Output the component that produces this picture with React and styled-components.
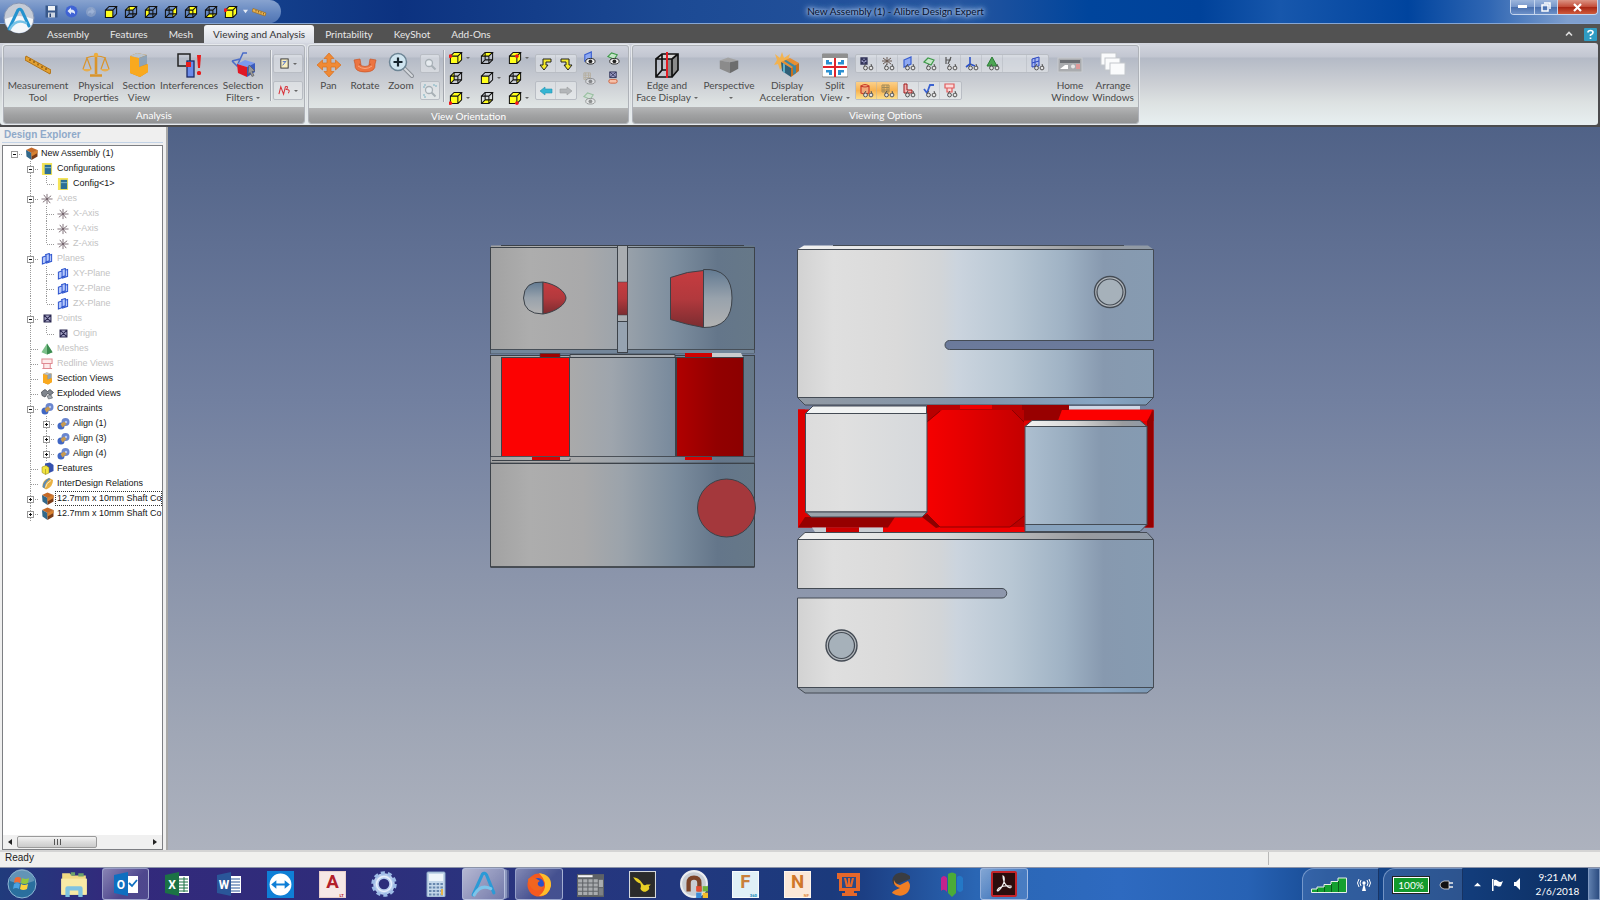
import React from "react";
import styled, { createGlobalStyle, css } from "styled-components";

const UI = `Lato, "Open Sans", "Noto Sans", sans-serif`;
const TREE = `"Liberation Sans", Arial, sans-serif`;

const Global = createGlobalStyle`
  *, *::before, *::after { box-sizing: border-box; }
  body { margin: 0; background: #efefef; }
  button { font: inherit; color: inherit; background: none; border: 0; padding: 0; margin: 0; }
  svg { display: block; flex: none; }
`;

const Shell = styled.div`
  position: relative;
  min-height: 100vh;
  display: flex;
  flex-direction: column;
  font-family: ${UI};
  font-size: 10px;
  line-height: 12px;
  color: #4a4a4a;
`;

/* ---------- title bar ---------- */
const TitleBar = styled.header`
  height: 24px;
  display: flex;
  align-items: flex-start;
  border-bottom: 1px solid #86a6d4;
  background: linear-gradient(90deg, #6f92c8 0, #14408c 260px, #0c3280 25%, #1c4a94 42%, #26559f 60%, #00459c 68%, #00429a 75%, #1757ac 80%, #00449e 88%, #2f66b3 93%, #7f9fce 98%);
`;
const QuickAccess = styled.div`
  display: flex;
  align-items: center;
  height: 23px;
  padding: 0 12px 0 41px;
  border-radius: 0 12px 12px 0;
  background: linear-gradient(180deg, #88a3cf, #6285bf 60%, #5074b2);
`;
const QuickButton = styled.button`
  width: ${(p) => (p.$narrow ? 8 : 20)}px;
  height: 20px;
  display: grid;
  place-items: center;
  opacity: ${(p) => (p.$faded ? 0.45 : 1)};
`;
const WindowTitle = styled.h1`
  flex: 1;
  margin: 0;
  text-align: center;
  font-size: 10px;
  font-weight: 400;
  line-height: 23px;
  color: #05102c;
  text-shadow: 0 0 3px #a9c2e8, 0 0 5px #a9c2e8, 0 0 6px #a9c2e8, 0 0 8px #a9c2e8;
`;
const WindowButtons = styled.div`
  display: flex;
  height: 15px;
  margin-right: 2px;
  border: 1px solid #c6d6ee;
  border-top: 0;
  border-radius: 0 0 4px 4px;
  overflow: hidden;
`;
const WindowButton = styled.button`
  width: ${(p) => (p.$close ? 40 : 23)}px;
  display: grid;
  place-items: center;
  border-left: ${(p) => (p.$first ? 0 : 1)}px solid #c6d6ee;
  background: ${(p) =>
    p.$close
      ? "linear-gradient(180deg, #dc9484, #c24a36 50%, #a82614 52%, #cf5b3c)"
      : "linear-gradient(180deg, #9db6dc, #7595c9 50%, #4a70ae 52%, #6c90c8)"};
`;
const Orb = styled.button`
  position: absolute;
  z-index: 2;
  left: 3px;
  top: 2px;
  width: 32px;
  height: 32px;
`;

/* ---------- tabs ---------- */
const TabBar = styled.nav`
  height: 19px;
  display: flex;
  gap: 1px;
  align-items: flex-end;
  padding: 0 3px 0 37px;
  background: #525252;
`;
const Tab = styled.button`
  height: 18px;
  padding: 0 10px;
  line-height: 18px;
  color: #e8e8e8;
  border-radius: 3px 3px 0 0;
  ${(p) =>
    p.$active &&
    css`
      padding: 0 9px;
      color: #333;
      background: linear-gradient(180deg, #f6f7f9, #d8dce4);
    `}
`;
const Spacer = styled.span`
  flex: 1;
`;
const BarButton = styled.button`
  height: 18px;
  width: ${(p) => p.$w}px;
  display: grid;
  place-items: center;
`;

/* ---------- ribbon ---------- */
const RibbonFrame = styled.div`
  background: #4c4c4e;
  padding: 0 2px 2px 0;
`;
const Ribbon = styled.div`
  display: flex;
  gap: 3px;
  height: 82px;
  padding: 2px 2px 1px 3px;
  border-radius: 0 3px 3px 3px;
  background: linear-gradient(180deg, #d3d6df 0, #c2c6d1 14px, #b4bac6 15px, #cdd0d5 42px, #dde2e2 60px, #e8eff1 82px);
`;
const Group = styled.section`
  width: ${(p) => p.$w}px;
  display: flex;
  flex-direction: column;
  border: 1px solid #aeb2b8;
  border-radius: 3px;
  box-shadow: 0 0 0 1px #e6e9ec;
  overflow: hidden;
`;
const GroupBody = styled.div`
  flex: 1;
  display: flex;
  padding-left: 2px;
`;
const GroupLabel = styled.h2`
  margin: 0;
  height: 16px;
  font-size: 10px;
  font-weight: 400;
  line-height: 16px;
  text-align: center;
  color: #fff;
  background: linear-gradient(180deg, #b4b5b6, #a0a1a2 50%, #929394);
`;
const BigButtonBox = styled.button`
  width: ${(p) => p.$w}px;
  flex: none;
  display: flex;
  flex-direction: column;
  align-items: center;
  padding-top: 4px;
  white-space: nowrap;
`;
const BigIcon = styled.span`
  height: 29px;
  display: grid;
  place-items: center;
`;
const Caption = styled.span`
  display: block;
  height: 12px;
`;
const Arrow = styled.span`
  display: inline-block;
  margin-left: 3px;
  vertical-align: 2px;
  border: 2px solid transparent;
  border-top-color: #666;
  border-bottom: 0;
`;
const Separator = styled.span`
  width: 1px;
  margin: 4px 2px 6px ${(p) => p.$left || 2}px;
  background: #a3a7ae;
  box-shadow: 1px 0 #eceef0;
`;
const Stack = styled.div`
  display: flex;
  flex-direction: column;
  align-items: flex-start;
  gap: 8px;
  padding-top: 8px;
  margin-left: ${(p) => p.$left || 0}px;
`;
const Strip = styled.div`
  display: flex;
  height: 19px;
  border: 1px solid #b9bdc4;
  border-radius: 2px;
  background: rgba(240, 242, 245, 0.45);
`;
const StripButton = styled.button`
  width: ${(p) => p.$w || 21}px;
  display: flex;
  align-items: center;
  justify-content: center;
  border-right: 1px solid rgba(170, 174, 182, 0.4);
  &:last-child { border-right: 0; }
  background: ${(p) => (p.$on ? "linear-gradient(180deg, #fbd08a, #f8b350 50%, #fde08c)" : "none")};
`;
const IconGrid = styled.div`
  display: grid;
  grid-template-columns: ${(p) => p.$cols};
  grid-auto-rows: 20px;
  margin-left: ${(p) => p.$left || 0}px;
  align-content: start;
  padding-top: 2px;
`;
const GridButton = styled.button`
  display: flex;
  align-items: center;
`;

/* ---------- work area ---------- */
const Work = styled.main`
  flex: 1;
  display: flex;
  min-height: 0;
`;
const Explorer = styled.aside`
  width: 168px;
  flex: none;
  display: flex;
  flex-direction: column;
  padding: 0 3px 0 2px;
  background: #efefef;
  border-right: 2px solid #a8a8a8;
  font-family: ${TREE};
  color: #111;
`;
const ExplorerTitle = styled.h2`
  margin: 0 0 2px;
  padding-left: 2px;
  height: 16px;
  font-size: 10px;
  font-weight: 700;
  line-height: 16px;
  color: #8fa9c9;
  border-bottom: 1px solid #c3d3e6;
`;
const TreeBox = styled.div`
  flex: 1;
  display: flex;
  flex-direction: column;
  border: 1px solid #7d7f83;
  background: #fff;
  overflow: hidden;
`;
const TreeList = styled.ul`
  flex: 1;
  list-style: none;
  margin: 0;
  padding: 0 0 0 4px;
`;
const TreeRow = styled.li`
  display: flex;
  height: 15px;
  align-items: center;
  white-space: nowrap;
  color: ${(p) => (p.$dim ? "#c3c3c3" : "#151515")};
`;
const Node = styled.button`
  flex: none;
  width: 16px;
  height: 15px;
`;
const NodeIcon = styled.span`
  width: 16px;
  flex: none;
  display: grid;
  place-items: center;
`;
const NodeLabel = styled.span`
  flex: 1;
  height: 15px;
  padding-left: 2px;
  font-size: 9px;
  line-height: 14px;
  overflow: hidden;
  ${(p) => p.$focus && css`outline: 1px dotted #333; outline-offset: -1px;`}
`;
const ScrollBar = styled.div`
  height: 14px;
  display: flex;
  align-items: center;
  background: #f0f0f0;
`;
const ScrollArrow = styled.button`
  width: 14px;
  height: 14px;
  display: grid;
  place-items: center;
`;
const ScrollThumb = styled.span`
  width: 80px;
  height: 12px;
  display: grid;
  place-items: center;
  border: 1px solid #9a9a9a;
  border-radius: 2px;
  background: linear-gradient(180deg, #f4f4f4, #dcdcdc 50%, #cbcbcb);
`;
const Canvas = styled.div`
  flex: 1;
  min-width: 0;
  background: linear-gradient(180deg, #506287 0, #5f6f92 16%, #7280a0 38%, #8b95ab 62%, #a0a7b6 84%, #adb2be 100%);
  display: flex;
`;
const Scene = styled.svg`
  flex: 1 1 0;
  min-width: 0;
  width: 100%;
`;
const StatusBar = styled.footer`
  height: 17px;
  display: flex;
  align-items: flex-start;
  padding-left: 5px;
  font-family: ${TREE};
  font-size: 10px;
  color: #222;
  background: #f0f0ee;
  border-top: 2px solid #d4d4d4;
`;
const StatusCell = styled.span`
  flex: ${(p) => p.$grow};
  height: 13px;
  line-height: 12px;
  ${(p) => p.$line && css`border-left: 1px solid #b8b8b8;`}
`;

/* ---------- taskbar ---------- */
const TaskBar = styled.div`
  height: 33px;
  display: flex;
  border-top: 1px solid #8b93a8;
  background: linear-gradient(90deg, #203b7c 0, #33297c 7%, #2f2c7a 20%, #2a337e 30%, #22387f 42%, #1b3a7c 52%, #1c3f84 54%, #2a66b4 61%, #2e6ac0 70%, #2762b4 78%, #174a92 83%, #123c7a 92%, #0b2b5c 100%);
`;
const StartButton = styled.button`
  width: 48px;
  display: grid;
  place-items: center;
  padding-right: 4px;
`;
const Tasks = styled.div`
  flex: 0 1 982px;
  display: grid;
  grid-template-columns: repeat(19, 1fr);
`;
const Task = styled.button`
  display: grid;
  place-items: center;
  margin: 0 2px;
  border-radius: 3px;
  ${(p) =>
    p.$open &&
    css`
      border: 1px solid rgba(200, 212, 238, 0.6);
      background: linear-gradient(135deg, rgba(255, 255, 255, 0.42), rgba(255, 255, 255, 0.14) 60%);
    `}
  ${(p) =>
    p.$bright &&
    css`
      margin: 0 8px 0 1px;
      background: linear-gradient(135deg, rgba(255, 255, 255, 0.65), rgba(255, 255, 255, 0.35));
      box-shadow: 3px 0 0 -1px rgba(160, 172, 205, 0.7), 6px 0 0 -2px rgba(120, 132, 170, 0.6);
    `}
`;
const Tray = styled.div`
  display: flex;
  color: #fff;
`;
const TrayPanel = styled.div`
  width: ${(p) => p.$w}px;
  margin-right: 4px;
  display: flex;
  align-items: center;
  justify-content: center;
  gap: 10px;
  border: 1px solid rgba(170, 196, 232, 0.55);
  border-bottom: 0;
  border-right-color: rgba(10, 30, 70, 0.6);
  border-radius: 12px 0 0 0;
  background: rgba(140, 170, 215, 0.22);
`;
const TrayButton = styled.button`
  width: 20px;
  display: grid;
  place-items: center;
`;
const Battery = styled.span`
  width: 36px;
  height: 16px;
  border: 1px solid #fff;
  background: #139a2c;
  font-size: 10px;
  line-height: 14px;
  text-align: center;
  box-shadow: 2px 0 0 -1px #111, 0 0 0 1px #222;
`;
const Clock = styled.div`
  width: 61px;
  display: flex;
  flex-direction: column;
  justify-content: center;
  text-align: center;
  line-height: 14px;
`;
const ShowDesktop = styled.button`
  width: 12px;
  border: 1px solid #7e98c0;
  background: linear-gradient(90deg, #5f7fae, #2b4c80);
`;

/* ---------- icons ---------- */
const FACES = {
  front: "1.5,5.5 9.5,5.5 9.5,13.5 1.5,13.5",
  back: "5.5,1.5 13.5,1.5 13.5,9.5 5.5,9.5",
  top: "1.5,5.5 5.5,1.5 13.5,1.5 9.5,5.5",
  bottom: "1.5,13.5 5.5,9.5 13.5,9.5 9.5,13.5",
  left: "1.5,5.5 5.5,1.5 5.5,9.5 1.5,13.5",
  right: "9.5,5.5 13.5,1.5 13.5,9.5 9.5,13.5",
};
function Cube({ face, dot, size = 14 }) {
  const solid = face === "iso";
  const list = solid ? ["front", "top", "right"] : [face];
  return (
    <svg width={size} height={size} viewBox="0 0 15 15">
      {list.map((f) => <polygon key={f} points={FACES[f]} fill="#ffff1a" />)}
      <g fill="none" stroke="#111" strokeWidth="1.1">
        {!solid && face !== "front" && <path d="M5.5 9.5V1.5M5.5 9.5H13.5M5.5 9.5L1.5 13.5" />}
        <path d="M1.5 5.5H9.5V13.5H1.5ZM1.5 5.5L5.5 1.5H13.5L9.5 5.5M13.5 1.5V9.5L9.5 13.5" />
      </g>
      {dot && <circle cx={dot[0]} cy={dot[1]} r="1.900" fill="#f01818" />}
    </svg>
  );
}
const Svg = ({ s = 26, h, vb = "0 0 26 26", children }) => (
  <svg width={s} height={h || s} viewBox={vb}>{children}</svg>
);
const SmallRuler = () => (
  <Svg>
    <path d="M1 4L26 18L25 22L0 8Z" fill="#e2a030" stroke="#b27215" />
    <path d="M5 7v2M9 9v2M13 11.500v2M17 14v2M21 16v2" stroke="#6d420a" />
  </Svg>
);
const QuickRuler = () => (
  <Svg s={15} vb="0 0 15 15">
    <path d="M1 4.500L14 9L13 12L0 7.500Z" fill="#e9b452" stroke="#9a6a1e" strokeWidth=".7" />
    <path d="M4 6v1.500M6.500 7v1.500M9 8v1.500M11.500 9v1.500" stroke="#7a4d10" strokeWidth=".8" />
  </Svg>
);
const Scales = () => (
  <Svg s={28} vb="0 0 28 26">
    <g fill="none" stroke="#d9942b" strokeWidth="1.200">
      <path d="M4 6Q14 2 24 6M5 6L1 17M5 6L9 17M23 6L19 17M23 6L27 17" />
      <path d="M14 3V22" strokeWidth="2.600" />
      <path d="M8 23.500H20" strokeWidth="2.500" />
    </g>
    <path d="M0 17H10Q5 22 0 17ZM18 17H28Q23 22 18 17Z" fill="#e6ae50" />
    <circle cx="14" cy="3" r="2.200" fill="#eead3a" />
  </Svg>
);
const SectionIcon = ({ s = 26 }) => (
  <Svg s={s}>
    <path d="M4 4L11 1L21 3V13L22 20L14 25L4 21Z" fill="#d98a14" />
    <path d="M4 4L13 6V15L22 12V20L14 25L4 21Z" fill="#f9a91e" />
    <path d="M4 4L11 1L21 3L13 6Z" fill="#b9c4cf" />
    <path d="M13 6L21 3V12L13 15Z" fill="#8fa4b8" />
  </Svg>
);
const Interference = () => (
  <Svg>
    <rect x="2" y="2" width="12" height="12" fill="none" stroke="#222" strokeWidth="1.500" />
    <rect x="11" y="9" width="7" height="16" fill="#6b8bea" stroke="#1c2a66" strokeWidth="1.300" />
    <path d="M10 10h5v5h-5z" fill="#e81c1c" />
    <path d="M21 3h4l-1 13h-2z" fill="#e81c1c" />
    <rect x="21" y="19" width="4" height="4" rx="1.500" fill="#e81c1c" />
  </Svg>
);
const SelectionIcon = () => (
  <Svg>
    <path d="M2 9L7 14L13 1H17M2 9L10 7" fill="none" stroke="#4a6cc8" strokeWidth="1.500" />
    <path d="M7 12L15 8L25 11L17 15Z" fill="#7b9aee" />
    <path d="M7 12L17 15V25L8 21Z" fill="#e01825" />
    <path d="M17 15L25 11V20L17 25Z" fill="#3a5bbf" />
    <path d="M19 13l6 6-3 .5 2 4-2 1-2-4-2 2z" fill="#999" stroke="#555" strokeWidth=".6" />
  </Svg>
);
const PanIcon = () => (
  <Svg>
    <path d="M13 1L18 6.500H15V11H19.500V8L25 13L19.500 18V15H15V19.500H18L13 25L8 19.500H11V15H6.500V18L1 13L6.500 8V11H11V6.500H8Z" fill="#f08a35" stroke="#d8701e" strokeWidth=".7" />
  </Svg>
);
const RotateIcon = () => (
  <Svg>
    <path d="M2 8L8 7L9 13L7 12Q13 17 19 12L17 13L18 7L24 8L23 12Q24 20 13 20T3 12Z" fill="#ec7440" stroke="#c9562a" strokeWidth=".7" />
    <path d="M6 14Q13 19 20 14" fill="none" stroke="#f9a880" />
  </Svg>
);
const ZoomIcon = () => (
  <Svg>
    <path d="M16 16L24 24" stroke="#8a8f96" strokeWidth="4" strokeLinecap="round" />
    <path d="M16 16L24 24" stroke="#d6dade" strokeWidth="2" strokeLinecap="round" />
    <circle cx="10" cy="10" r="8.500" fill="#cfe4ef" stroke="#6d8595" strokeWidth="1.500" />
    <path d="M10 5.500V14.500M5.500 10H14.500" stroke="#15232c" strokeWidth="2.200" />
  </Svg>
);
const GreyGlass = ({ box }) => (
  <Svg s={14} vb="0 0 14 14">
    {box && <path d="M1 4V1H4M10 1H13V4M1 10V13H4" fill="none" stroke="#7bb1c2" strokeDasharray="2 1" />}
    <circle cx="6" cy="6" r="3.500" fill="#e6ebef" stroke="#a8b0b6" strokeWidth="1.300" />
    <path d="M8.500 8.500L12.500 12.500" stroke="#a8b0b6" strokeWidth="2" />
  </Svg>
);
const EdgeIcon = () => (
  <Svg>
    <path d="M8 2H24L18 7H2Z" fill="#d4d4d4" />
    <path d="M13 7H18L24 2V18L18 25H13Z" fill="#8b8b8b" />
    <path d="M2 7H18V25H2ZM2 7L8 2H24V18L18 25M18 7L24 2M8 2V18H13M2 25L8 18" fill="none" stroke="#111" strokeWidth="1.700" />
    <path d="M13 0V26" stroke="#e41c24" strokeWidth="2" />
  </Svg>
);
const PerspectiveIcon = () => (
  <Svg s={24}>
    <path d="M3 8L12 5L23 8L14 10Z" fill="#a2a2a2" />
    <path d="M3 8L14 10V22L3 17Z" fill="#8b8b8b" />
    <path d="M14 10L23 8V17L14 22Z" fill="#6d6d6d" />
  </Svg>
);
const AccelIcon = () => (
  <Svg>
    <path d="M1 2L6 6L8 0L10 6L16 2L14 8L6 18L4 12L0 13L3 8Z" fill="#fbb03b" opacity=".85" />
    <path d="M7 10L16 6L25 11L17 16Z" fill="#e88f33" />
    <path d="M7 10L17 16V25L8 19Z" fill="#2f5f78" />
    <path d="M17 16L25 11V19L17 25Z" fill="#c8701e" />
    <path d="M19 15L22 13V21L19 23ZM12 8L21 13.500L19 15L10 9Z" fill="#3f86a0" />
    <path d="M9 11L11 12.500V21L9 20Z" fill="#62b1c8" />
  </Svg>
);
const SplitIcon = () => (
  <Svg>
    <rect x="0" y="2" width="26" height="23" rx="1" fill="#fff" stroke="#888" />
    <rect x="0" y="2" width="26" height="4" fill="#8f8f8f" />
    <path d="M13 6V25M1 15H25" stroke="#e0242c" strokeWidth="2" />
    <path d="M4 8H7V10H10V12.500H4ZM22 8H19V10H16V12.500H22ZM4 18H10V23H7V20.500H4ZM22 18V20.500H19V23H16V18Z" fill="#2b90d2" />
  </Svg>
);
const HomeIcon = () => (
  <Svg>
    <rect x="1" y="6" width="24" height="14" fill="#a9abae" stroke="#c9ccd0" />
    <rect x="3" y="8" width="20" height="3" fill="#6d7075" />
    <path d="M3 17L8 13H11V17Z" fill="#fff" />
    <circle cx="16" cy="14.500" r="2" fill="#e5e5e5" />
    <rect x="19" y="12" width="4" height="5" fill="#d99" />
  </Svg>
);
const ArrangeIcon = () => (
  <Svg>
    {[[1, 1], [5, 6], [10, 11]].map(([x, y]) => (
      <rect key={x} x={x} y={y} width="15" height="12" fill="#fafbfc" stroke="#c3c7cc" />
    ))}
  </Svg>
);
const Glasses = () => (
  <g fill="none" stroke="#555" strokeWidth="1">
    <circle cx="6.500" cy="12" r="1.900" fill="#e5e5e5" />
    <circle cx="12" cy="12" r="1.900" fill="#e5e5e5" />
    <path d="M5 10.500L7 8M13 10.500L12 8" />
  </g>
);
const SHAPES = {
  point: <path d="M2 2H8V8H2ZM2 2L8 8M8 2L2 8" stroke="#33355a" strokeWidth="1.300" fill="#9fa0c8" />,
  axis: <path d="M2 5H12M7 1V9M3 2L11 8M11 2L3 8" stroke="#6a5a52" fill="none" />,
  plane: <path d="M3 4L10 1V8L3 11Z" stroke="#3a5fd0" fill="#8ea9f2" strokeWidth="1.200" />,
  surface: <path d="M2 6L6 2L12 4L9 9Z" stroke="#3f9a4a" fill="#c5e5c8" strokeWidth="1.200" />,
  sketch: <path d="M3 1V8M3 4H8M8 1L5 8" stroke="#555" fill="none" strokeWidth="1.200" />,
  triad: <path d="M6 1V8L2 11M6 8L11 10" stroke="#2b52c8" fill="none" strokeWidth="1.600" />,
  mesh: <path d="M7 1L12 10H2Z" fill="#4da553" stroke="#2b7d35" />,
  grid: <path d="M2 3L9 1V10L2 11ZM5 2V11M2 7L9 5" stroke="#2b46c0" fill="#a8b8ee" />,
  cyl: <path d="M2 3V10Q6 12 10 10V3Q6 0 2 3Q6 5 10 3" stroke="#c83a2a" fill="#f0a878" strokeWidth="1.200" />,
  net: <path d="M2 2H9V9H2ZM4 2V9M7 2V9M2 4.500H9M2 7H9" stroke="#a08a5a" fill="none" />,
  lred: <path d="M3 1V10H11V7H6V1Z" stroke="#a01818" fill="#f2b3b3" />,
  check: <path d="M2 6L5 10L8 2H12" stroke="#3a62d0" fill="none" strokeWidth="1.800" />,
  redline: <path d="M2 1H11V5H2ZM4 5V9H9V5" stroke="#e05a5a" fill="#fbdada" strokeWidth="1.200" />,
};
const ViewIcon = ({ kind }) => (
  <Svg s={15} vb="0 0 15 15">{SHAPES[kind]}<Glasses /></Svg>
);

const TREE_ICONS = {
  asm: <Svg s={13}><path d="M2 6L13 1L25 6L13 12Z" fill="#c56a28" /><path d="M2 6L13 12V26L3 19Z" fill="#32688a" /><path d="M13 12L25 6V19L13 26Z" fill="#7a3c18" /><path d="M13 12L25 6V12L13 19Z" fill="#d9822f" /></Svg>,
  config: <Svg s={12}><rect x="2" y="0" width="22" height="26" fill="#f5e458" /><rect x="8" y="4" width="14" height="20" fill="#2c6f96" /><path d="M8 10H22" stroke="#9fd0e0" strokeWidth="1.500" /></Svg>,
  axis: <Svg s={12}><path d="M1 13H25M13 2V24M4 20L22 6M6 4L20 22" stroke="#6b5b63" strokeWidth="1.800" /></Svg>,
  plane: <Svg s={12}><path d="M3 9L11 6V21L3 24ZM9 4L18 1V17L9 20M18 5L23 3V18L11 22" fill="#b5c8fb" stroke="#2f56cf" strokeWidth="2.200" /></Svg>,
  point: <Svg s={9}><path d="M3 3H23V23H3ZM3 3L23 23M23 3L3 23" fill="#a8a6c8" stroke="#2a2850" strokeWidth="3" /></Svg>,
  mesh: <Svg s={12}><path d="M13 1L25 20L13 25L1 20Z" fill="#7cc08a" /><path d="M13 1L25 20L13 25Z" fill="#3c8b50" /></Svg>,
  redline: <Svg s={12}><path d="M2 2H24V12H2ZM6 12V23H20V12M3 23H24" fill="#fdeaea" stroke="#df8a92" strokeWidth="2.200" /></Svg>,
  section: <SectionIcon s={13} />,
  exploded: <Svg s={13}><path d="M1 10L8 5L13 9L18 5L25 11L19 16L13 13L8 20L2 17Z" fill="#80868e" stroke="#41464d" strokeWidth="1.500" /><path d="M12 18L20 16L23 22L15 24Z" fill="#a4aab1" stroke="#41464d" /></Svg>,
  align: <Svg s={13}><circle cx="17" cy="10" r="8" fill="#6a86cf" /><circle cx="8" cy="18" r="7" fill="#3f66c4" /><circle cx="18" cy="10" r="2.500" fill="#b9c8ee" /><path d="M7 14L14 9L19 14L11 21Z" fill="#c89a50" /></Svg>,
  feature: <Svg s={13}><path d="M8 3L18 1L25 6V18L16 22L8 18Z" fill="#3551ae" /><path d="M2 10L10 7L16 11V22L9 25L2 21Z" fill="#f1e440" stroke="#8d7f10" /><path d="M9 14V25" stroke="#8d7f10" /></Svg>,
  inter: <Svg s={13}><path d="M3 20Q2 6 16 2L24 6Q24 20 10 25Z" fill="#e9b142" /><path d="M3 20Q4 8 16 2L19 4Q8 10 7 23Z" fill="#5d8bb4" /><path d="M9 21Q10 12 20 7" stroke="#f7edc8" strokeWidth="2" fill="none" /></Svg>,
};

/* guide columns: "|" passes through, "t" tee, "l" elbow, "-" / "+" expanders, "o" root */
const ROWS = [
  ["o", "asm", "New Assembly (1)"],
  [" -", "config", "Configurations"],
  [" |l", "config", "Config<1>"],
  [" -", "axis", "Axes", 1],
  [" |t", "axis", "X-Axis", 1],
  [" |t", "axis", "Y-Axis", 1],
  [" |l", "axis", "Z-Axis", 1],
  [" -", "plane", "Planes", 1],
  [" |t", "plane", "XY-Plane", 1],
  [" |t", "plane", "YZ-Plane", 1],
  [" |l", "plane", "ZX-Plane", 1],
  [" -", "point", "Points", 1],
  [" |l", "point", "Origin", 1],
  [" t", "mesh", "Meshes", 1],
  [" t", "redline", "Redline Views", 1],
  [" t", "section", "Section Views"],
  [" t", "exploded", "Exploded Views"],
  [" -", "align", "Constraints"],
  [" |+", "align", "Align (1)"],
  [" |+", "align", "Align (3)"],
  [" |+", "align", "Align (4)"],
  [" t", "feature", "Features"],
  [" t", "inter", "InterDesign Relations"],
  [" +", "asm", "12.7mm x 10mm Shaft Co", 0, 1],
  [" +", "asm", "12.7mm x 10mm Shaft Co"],
];
function Guide({ kind }) {
  const dot = { stroke: "#9a9a9a", strokeDasharray: "1 1", fill: "none" };
  const box = "o+-".includes(kind);
  const art = (
    <svg width="16" height="15" viewBox="0 0 16 15">
      {kind !== " " && kind !== "o" && <path d={kind === "l" ? "M7.500 0V8" : "M7.500 0V15"} {...dot} />}
      {kind !== " " && kind !== "|" && <path d="M8 8.500H16" {...dot} />}
      {box && (
        <>
          <rect x="4.500" y="5.500" width="6" height="6" fill="#fff" stroke="#999" />
          <path d={kind === "+" ? "M6 8.500H9M7.500 7V10" : "M6 8.500H9"} stroke="#111" />
        </>
      )}
    </svg>
  );
  return box ? <Node aria-label={kind === "+" ? "Expand" : "Collapse"}>{art}</Node> : art;
}

/* ---------- 3D scene ---------- */
const Stops = ({ id, list, v }) => (
  <linearGradient id={id} x1="0" y1="0" x2={v ? 0 : 1} y2={v ? 1 : 0}>
    {list.map(([o, c]) => <stop key={o} offset={o} stopColor={c} />)}
  </linearGradient>
);
function Model() {
  return (
    <Scene viewBox="168 127 1432 723" preserveAspectRatio="xMidYMid meet" role="img" aria-label="Shaft coupling assembly">
      <defs>
        <Stops id="steel" list={[[0, "#d2d2d2"], [0.1, "#dfdfdf"], [0.28, "#dadada"], [0.4, "#d2d5d8"], [0.45, "#cbd4de"], [0.6, "#b8c7d4"], [0.75, "#9fb2c4"], [0.86, "#8799af"], [1, "#869bb1"]]} />
        <Stops id="light" list={[[0, "#dcdcdc"], [0.3, "#e0e0e0"], [1, "#d5d8db"]]} />
        <Stops id="blue" list={[[0, "#adbfd0"], [0.35, "#99adc0"], [0.62, "#8699af"], [1, "#859bb2"]]} />
        <Stops id="chamfer" list={[[0, "#f2f2f2"], [0.4, "#d8d8d8"], [0.8, "#9a9c9f"], [1, "#8e99a6"]]} />
        <Stops id="under" list={[[0, "#929aa4"], [0.5, "#7f93a9"], [0.85, "#88a6c4"], [1, "#7c98b4"]]} />
        <Stops id="grey" list={[[0, "#a2a2a2"], [0.15, "#adadad"], [0.35, "#a9a9aa"], [0.5, "#9ba3ab"], [0.7, "#7c8d9e"], [0.86, "#64768a"], [1, "#667888"]]} />
        <Stops id="greyMid" list={[[0, "#aaaaaa"], [0.4, "#9ea5ad"], [1, "#77899c"]]} />
        <Stops id="redMid" list={[[0, "#f60000"], [0.4, "#e40000"], [1, "#c40000"]]} />
        <Stops id="redDark" list={[[0, "#b00000"], [0.6, "#920000"], [1, "#8c0000"]]} />
        <Stops id="bore" v list={[[0, "#c63c40"], [0.5, "#b2393d"], [1, "#7b2c30"]]} />
        <Stops id="cavity" v list={[[0, "#627a92"], [0.5, "#98a2ac"], [1, "#b2b2b2"]]} />
      </defs>

      <g stroke="#3c4249" strokeWidth="1">
        <path d="M491 245.500H754.500V249H491Z" fill="url(#grey)" stroke="none" />
        <path d="M501 245.500H744" fill="none" />
        <rect x="490.500" y="247.500" width="264" height="102" fill="url(#grey)" />
        <rect x="490.500" y="349.500" width="264" height="4" fill="#73869a" strokeWidth=".6" />
        <rect x="617.500" y="245.500" width="10" height="107" fill="#a9adb1" />
        <rect x="618" y="322" width="9" height="30" fill="#96a3b1" stroke="none" />
        <rect x="617.500" y="282" width="10" height="33" fill="url(#bore)" strokeWidth=".5" />
        <path d="M617 321.500H628" />
        <path d="M543 282Q524 281 523.500 298Q524 314 543 314Z" fill="url(#cavity)" />
        <path d="M543 282C556 284 566 292 566 298S556 312 543 314Z" fill="url(#bore)" />
        <path d="M703.500 269.500Q732 268 732 298T703.500 327.500Z" fill="url(#cavity)" />
        <path d="M670.500 277.500Q688 271 703.500 270.500V327.500Q688 325 670.500 319.500Z" fill="url(#bore)" />

        <rect x="490.500" y="355.500" width="264" height="101" fill="url(#grey)" />
        <path d="M491 354H755" stroke="#6d8095" />
        <path d="M570 357.500V354.500H675V357.500" fill="#a6abb0" />
        <rect x="569.500" y="357.500" width="106" height="99" fill="url(#greyMid)" />
        <path d="M540 353.500H560V358H540Z" fill="#a00000" strokeWidth=".6" />
        <path d="M685 353H712V358H685Z" fill="#d00000" stroke="none" />
        <path d="M712 353H741L743 357H712Z" fill="#c9cbcd" stroke="none" />
        <rect x="501.500" y="357.500" width="68" height="99" fill="#fc0202" />
        <rect x="676.500" y="357.500" width="67" height="99" fill="url(#redDark)" />
        <rect x="490.500" y="456.500" width="264" height="6.500" fill="url(#grey)" strokeWidth=".7" />
        <path d="M532 457H560V460H532Z" fill="#d80000" stroke="none" />
        <path d="M685 457H712V460H685Z" fill="#d80000" stroke="none" />
        <path d="M492 460.500H570V458.500M675V457V460.500H752" fill="none" />
        <rect x="490.500" y="463.500" width="264" height="103.500" fill="url(#grey)" />
        <path d="M491 567H754" strokeWidth="1.600" />
        <circle cx="726.500" cy="508" r="29" fill="#a4383c" />
      </g>

      <g stroke="#444b54" strokeWidth="1">
        <path d="M797.500 249.500L804 245.500H1148L1153.500 249.500Z" fill="url(#chamfer)" stroke="none" />
        <path d="M833 245.500H1124" />
        <path d="M797.500 249.500H1153.500V340.500H949.500A4.500 4.500 0 0 0 949.500 349.500H1153.500V397.500H797.500Z" fill="url(#steel)" />
        <path d="M797.500 397.500H1153.500L1146 405H805Z" fill="url(#under)" />
        <circle cx="1110" cy="292" r="15.500" fill="#b3b8bd" strokeWidth="1.400" />
        <circle cx="1110" cy="292" r="13" fill="#a6b1ba" strokeWidth="1.200" />

        <rect x="812" y="406" width="328" height="4" fill="#cfd8e6" stroke="none" />
        <g stroke="none">
          <rect x="798" y="409.500" width="355.500" height="118" fill="#e00000" />
          <path d="M927 405H1069V410H1153.500V421H927Z" fill="#b80000" />
          <path d="M960 405H992V409H960Z" fill="#ee0000" />
          <path d="M1022 405H1069V410H1062L1058 420H1022Z" fill="#980000" />
          <path d="M1062 410H1152L1148 421H1058Z" fill="#fc0000" />
          <path d="M1147 421L1153.500 410V527.500H1145Z" fill="#960000" />
          <path d="M883 517H1025V532H883Z" fill="#ee0000" />
          <path d="M798 527.500L805 517H895L888 527.500Z" fill="#960000" />
          <path d="M798 409.500H805V512L798 527Z" fill="#dd0000" />
          <path d="M927 410H1024V527H940L927 516Z" fill="#b80000" />
          <path d="M942 410H1012L1024 422V516L1010 527H940L927 514V422Z" fill="url(#redMid)" />
          <path d="M826 527.500H859V532H826Z" fill="#c80000" />
          <path d="M812 527.500H826V532H815ZM859 527.500H883V532H859Z" fill="#c9ced4" />
        </g>
        <path d="M927 422L940 411M1012 410L1024 422M927 514L940 527H1010L1024 516" fill="none" stroke="#8c0000" />
        <path d="M922 517L927 514L940 527L936 528Z" fill="#8c0000" stroke="none" />
        <path d="M805.500 413.500L813 406H926.500V413.500Z" fill="#f1f3f3" />
        <rect x="805.500" y="413.500" width="121.500" height="98.500" fill="url(#light)" />
        <path d="M805.500 512H927L922 517H811Z" fill="#9ba3ab" />
        <path d="M1025 426.500L1032 420.500H1140L1147 426.500Z" fill="url(#chamfer)" />
        <rect x="1025" y="426.500" width="122" height="98" fill="url(#blue)" />
        <path d="M1025 524.500H1147L1140 531.500H1025Z" fill="#87a2bd" />

        <path d="M797.500 539.500L805 532.500H1147L1153.500 539.500Z" fill="url(#chamfer)" />
        <path d="M797.500 539.500H1153.500V687.500H797.500V598H1002A4.500 4.500 0 0 0 1002 588.500H797.500Z" fill="url(#steel)" />
        <path d="M797.500 687.500H1153.500L1147 693H805Z" fill="url(#under)" />
        <circle cx="841.500" cy="645.500" r="15.500" fill="#b3b8bd" strokeWidth="1.400" />
        <circle cx="841.500" cy="645.500" r="13" fill="#a6b1ba" strokeWidth="1.200" />
      </g>
    </Scene>
  );
}

const LogoA = ({ s = 27 }) => (
  <Svg s={s}>
    <path d="M3 23L12 3Q14 1 16 4L23 21" fill="none" stroke="#2b9ad6" strokeWidth="3" strokeLinecap="round" />
    <path d="M4 23Q10 12 20 17" fill="none" stroke="#7cc4ea" strokeWidth="3" strokeLinecap="round" />
  </Svg>
);
const Tile = ({ bg, edge, fg, letter, tag, tagColor }) => (
  <Svg s={27}>
    <rect x=".5" y=".5" width="25" height="25" fill={bg} stroke={edge} />
    <text x="13" y="16" fontFamily="Roboto, sans-serif" fontSize="18" fontWeight="700" fill={fg} textAnchor="middle">{letter}</text>
    <text x="24" y="25" fontFamily="Roboto, sans-serif" fontSize="4" fontWeight="700" fill={tagColor} textAnchor="end">{tag}</text>
  </Svg>
);
const Office = ({ color, letter, children }) => (
  <Svg s={26}>
    <rect x="12" y="5" width="13" height="17" fill="#fff" />
    {children}
    <path d="M1 4L15 1V25L1 22Z" fill={color} />
    <text x="8" y="17.500" fontFamily="Roboto, sans-serif" fontSize="12" fontWeight="700" fill="#fff" textAnchor="middle">{letter}</text>
  </Svg>
);

const TASKS = [
  ["File Explorer", <Svg s={28}><path d="M2 3H9L11 5H24V23H2Z" fill="#f0d983" /><path d="M1 8H25V23H1Z" fill="#f8eaa6" /><path d="M10 2H14V5H10ZM17 3H22V6H17Z" fill="#6da36b" /><path d="M5 25V17Q5 15 7 15H19Q21 15 21 17V25H17V19H9V25Z" fill="#7fc3e2" /></Svg>],
  ["Outlook", <Office color="#0f6fc0" letter="O"><rect x="12" y="7" width="13" height="13" fill="#fff" /><path d="M16 12L19 15L24 9" fill="none" stroke="#0f6fc0" strokeWidth="1.800" /></Office>, 1],
  ["Excel", <Office color="#1c7245" letter="X"><path d="M15 8H24M15 11H24M15 14H24M15 17H24M15 20H24M20 6V21" stroke="#1c7245" /></Office>],
  ["Word", <Office color="#2a5699" letter="W"><path d="M15 8H24M15 11H24M15 14H24M15 17H24M15 20H24" stroke="#2a5699" /></Office>],
  ["TeamViewer", <Svg s={27}><rect width="26" height="26" fill="#0f7fd6" /><circle cx="13" cy="13" r="10.500" fill="#fff" /><path d="M4 13L9 9V12H17V9L22 13L17 17V14H9V17Z" fill="#0f7fd6" /></Svg>],
  ["AutoCAD", <Tile bg="#f6e8e6" edge="#e8cfcc" fg="#b3202a" letter="A" tag="LT" tagColor="#b3202a" />],
  ["Settings", <Svg s={26}><circle cx="13" cy="13" r="8" fill="none" stroke="#b7cdee" strokeWidth="5.500" /><circle cx="13" cy="13" r="11" fill="none" stroke="#9dbbe6" strokeWidth="3.500" strokeDasharray="4 2.910" /><circle cx="13" cy="13" r="7.500" fill="none" stroke="#e8f0fb" strokeWidth="1.500" /></Svg>],
  ["Calculator", <Svg s={26}><rect x="4" y="1" width="18" height="25" rx="1" fill="#c5d8ea" stroke="#8ba7c6" /><rect x="6" y="3" width="14" height="7" fill="#eef5fa" /><path d="M6 13H20M6 16.500H20M6 20H20M6 23.500H20" stroke="#6888ae" strokeWidth="2" strokeDasharray="2.500 1.300" /><path d="M18 18h2v6h-2z" fill="#e6b54a" /></Svg>],
  ["Alibre", <LogoA />, 2],
  ["Firefox", <Svg s={26}><circle cx="13" cy="14" r="11.500" fill="#f5591f" /><path d="M13 2Q26 4 25 15Q23 25 13 25Q20 20 19 12Q17 6 13 2Z" fill="#fdbd2c" /><circle cx="12" cy="13" r="6" fill="#2a50c8" /><path d="M2 8Q5 5 9 7L14 10Q11 11 12 14Q14 17 18 15Q15 21 8 19Q2 15 2 8Z" fill="#f2651f" /></Svg>, 1],
  ["Keypad", <Svg s={27}><rect y="3" width="26" height="22" fill="#5e6266" /><rect x="1" y="4" width="14" height="2" fill="#f4f4f4" /><path d="M1 9.500H20M1 13.500H20M1 17.500H20M1 21.500H20" stroke="#a9acaf" strokeWidth="3" strokeDasharray="4 1" /><path d="M21 12H25" stroke="#a9acaf" strokeWidth="7" /><path d="M21 20H25" stroke="#7d8185" strokeWidth="7" /></Svg>],
  ["Hummingbird", <Svg s={27}><rect x=".5" y=".5" width="25" height="25" fill="#2b2b2b" stroke="#d5d8dc" /><path d="M4 6Q9 6 13 12Q15 15 17 13L21 13L19 15Q21 18 16 20Q12 20 11 17Q12 14 11 12Q7 11 4 6Z" fill="#e8cf25" /></Svg>],
  ["Remote app", <Svg s={28}><circle cx="13" cy="13" r="12" fill="#c9ced4" stroke="#eceef0" strokeWidth="2" /><path d="M6 20V12Q6 5 13 5T20 12V20H16V12Q16 9 13 9T10 12V20Z" fill="#7c4428" /><path d="M15 15h5v5h-5z" fill="#e34d31" /><path d="M21 15h5v5h-5z" fill="#6fb43b" /><path d="M15 21h5v5h-5z" fill="#3b8dd8" /><path d="M21 21h5v5h-5z" fill="#f3bd2b" /></Svg>],
  ["Fusion 360", <Tile bg="#dff0f7" edge="#f6fafc" fg="#c9803a" letter="F" tag="360" tagColor="#0f86b8" />],
  ["Netfabb", <Tile bg="#fbe8d8" edge="#fff6ec" fg="#d0782a" letter="N" tag="NF" tagColor="#e08a3a" />],
  ["Printer", <Svg s={26}><path d="M1 2H24V20H18V22H21V25H6V22H9V20H3V8H1Z" fill="#e5672a" /><path d="M6 6H20V17H6Z" fill="#2a4a86" /><path d="M8 7H10L12 14V7H14V14L16 7H18L16 16H10Z" fill="#e5672a" /></Svg>],
  ["Sculpt", <Svg s={26}><path d="M22 5Q15 -1 8 3Q2 8 6 14L22 8Z" fill="#3a3d42" /><path d="M6 9Q7 13 12 14L20 10Q24 15 20 21Q13 28 4 22Q4 20 12 17Q5 15 6 9Z" fill="#f07f24" /></Svg>],
  ["Ribbons", <Svg s={26}><path d="M2 7Q5 3 8 7V21Q5 17 2 20Z" fill="#c4238e" /><path d="M9 3Q13 0 17 3V22L13 26L9 22Z" fill="#4bab38" /><path d="M18 6Q21 3 24 7V19Q21 23 18 19Z" fill="#2478c6" /></Svg>],
  ["Acrobat", <Svg s={26}><rect x="1" y="1" width="24" height="24" rx="1" fill="#2b0d0d" stroke="#c4242a" strokeWidth="2" /><path d="M12 5Q14 6 13 11Q11 17 7 20Q5 20 8 17Q13 14 20 15Q21 18 17 16Q12 12 12 5Z" fill="none" stroke="#f2f2f2" strokeWidth="1.100" /></Svg>, 1],
];

function BigButton({ w, icon, lines, drop }) {
  return (
    <BigButtonBox $w={w}>
      <BigIcon>{icon}</BigIcon>
      {lines.map((t, i) => (
        <Caption key={i}>
          {t}
          {drop && i === lines.length - 1 && <Arrow />}
        </Caption>
      ))}
    </BigButtonBox>
  );
}

const iso = (x, y) => <Cube face="iso" dot={[x, y]} />;
const QUICK = ["front", "top", "left", "right", "back", "bottom"];
const TABS = ["Assembly", "Features", "Mesh", "Viewing and Analysis", "Printability", "KeyShot", "Add-Ons"];
const Turn = ({ flip }) => (
  <Svg s={14} vb="0 0 14 14">
    <path d={flip ? "M2 2H10V8H13L9 13L5 8H7V5H2Z" : "M12 2H4V8H1L5 13L9 8H7V5H12Z"} fill="#f4ea2a" stroke="#222" />
  </Svg>
);
const SideArrow = ({ right }) => (
  <Svg s={14} vb="0 0 14 14">
    <path d={right ? "M13 7L8 3V5H1V9H8V11Z" : "M1 7L6 3V5H13V9H6V11Z"} fill={right ? "#b3b6b9" : "#35b5d3"} stroke={right ? "#9a9d9f" : "#2795b2"} strokeWidth=".6" />
  </Svg>
);
const EyeIcon = ({ kind, grey }) => (
  <Svg s={14} vb="0 0 15 15">
    <g opacity={grey ? 0.4 : 1}>
      {SHAPES[kind]}
      <ellipse cx="9" cy="11" rx="5" ry="3" fill="#eee" stroke="#222" />
      <circle cx="9" cy="11" r="2" fill="#222" />
    </g>
  </Svg>
);

export default function App() {
  return (
    <Shell>
      <Global />
      <Orb aria-label="Application menu">
        <svg width="32" height="32" viewBox="0 0 32 32">
          <circle cx="16" cy="16" r="15" fill="#c5cbd6" stroke="#8495b4" />
          <path d="M2 17Q16 11 30 17A14 14 0 0 1 2 17Z" fill="#f4f7fa" />
          <path d="M6 27L15 8Q17 6 19 9L26 24" fill="none" stroke="#2493cf" strokeWidth="3" strokeLinecap="round" />
          <path d="M7 27Q13 16 23 21" fill="none" stroke="#76c2e6" strokeWidth="2.500" strokeLinecap="round" />
        </svg>
      </Orb>

      <TitleBar>
        <QuickAccess>
          <QuickButton aria-label="Save">
            <Svg s={13}><path d="M1 1H25V25H1Z" fill="#38588a" /><path d="M6 2H20V11H6Z" fill="#eef2f6" /><path d="M6 15H20V25H6Z" fill="#cdd6e2" /><path d="M9 17H12V24H9Z" fill="#2a4573" /></Svg>
          </QuickButton>
          <QuickButton aria-label="Undo">
            <Svg s={13}><circle cx="13" cy="13" r="12" fill="#3f63d4" /><path d="M5 12L12 5V9Q21 9 20 18Q17 14 12 15V19Z" fill="#dfe8fb" /></Svg>
          </QuickButton>
          <QuickButton aria-label="Redo" $faded>
            <Svg s={12}><circle cx="13" cy="13" r="11" fill="#a9b5cc" /><path d="M21 12L14 5V9Q5 9 6 18Q9 14 14 15V19Z" fill="#dce3ef" /></Svg>
          </QuickButton>
          {QUICK.map((f) => <QuickButton key={f} aria-label={`${f} view`}><Cube face={f} /></QuickButton>)}
          <QuickButton aria-label="Isometric view">{iso(1.5, 5.5)}</QuickButton>
          <QuickButton aria-label="More views" $narrow><Svg s={5} vb="0 0 6 6"><path d="M0 1H6L3 5Z" fill="#e6ecf6" /></Svg></QuickButton>
          <QuickButton aria-label="Measure"><QuickRuler /></QuickButton>
        </QuickAccess>
        <WindowTitle>New Assembly (1) - Alibre Design Expert</WindowTitle>
        <WindowButtons>
          <WindowButton $first aria-label="Minimize"><Svg s={9} h={4} vb="0 0 9 4"><path d="M0 0H9V3H0Z" fill="#fff" /></Svg></WindowButton>
          <WindowButton aria-label="Restore"><Svg s={10} vb="0 0 10 10"><path d="M3 1H9V7M1 3H7V9H1Z" fill="none" stroke="#fff" strokeWidth="1.500" /></Svg></WindowButton>
          <WindowButton $close aria-label="Close"><Svg s={9} vb="0 0 9 9"><path d="M1 1L8 8M8 1L1 8" stroke="#fff" strokeWidth="2.200" /></Svg></WindowButton>
        </WindowButtons>
      </TitleBar>

      <TabBar>
        {TABS.map((t, i) => <Tab key={t} $active={i === 3}>{t}</Tab>)}
        <Spacer />
        <BarButton $w={26} aria-label="Collapse ribbon"><Svg s={8} vb="0 0 8 8"><path d="M1 5.500L4 2.500L7 5.500" fill="none" stroke="#ddd" strokeWidth="1.600" /></Svg></BarButton>
        <BarButton $w={14} aria-label="Help">
          <Svg s={13} vb="0 0 13 13"><rect width="13" height="13" rx="1" fill="#2f9cc4" /><path d="M4 4.500Q4 2.500 6.500 2.500T9 4.500Q9 6 6.500 7V8M6.500 9.500V11" fill="none" stroke="#fff" strokeWidth="1.700" /></Svg>
        </BarButton>
      </TabBar>

      <RibbonFrame>
        <Ribbon>
          <Group $w={302}>
            <GroupBody>
              <BigButton w={64} icon={<SmallRuler />} lines={["Measurement", "Tool"]} />
              <BigButton w={52} icon={<Scales />} lines={["Physical", "Properties"]} />
              <BigButton w={34} icon={<SectionIcon />} lines={["Section", "View"]} />
              <BigButton w={66} icon={<Interference />} lines={["Interferences"]} />
              <BigButton w={42} icon={<SelectionIcon />} lines={["Selection", "Filters"]} drop />
              <Separator $left={6} />
              <Stack>
                <Strip><StripButton $w={28} aria-label="Report"><Svg s={11} vb="0 0 12 12"><rect x="2" y="1" width="8" height="10" fill="#f7edc0" stroke="#333" /><path d="M4 8L8 3M4 4h3" stroke="#3a62c8" /></Svg><Arrow /></StripButton></Strip>
                <Strip><StripButton $w={28} aria-label="Curvature"><Svg s={13} vb="0 0 14 14"><path d="M1 11L3 3L6 11L8 3Q12 2 9 6Q14 6 11 10" fill="none" stroke="#d8343c" strokeWidth="1.100" /></Svg><Arrow /></StripButton></Strip>
              </Stack>
            </GroupBody>
            <GroupLabel>Analysis</GroupLabel>
          </Group>

          <Group $w={321}>
            <GroupBody>
              <BigButton w={35} icon={<PanIcon />} lines={["Pan"]} />
              <BigButton w={38} icon={<RotateIcon />} lines={["Rotate"]} />
              <BigButton w={34} icon={<ZoomIcon />} lines={["Zoom"]} />
              <Stack $left={2}>
                <Strip><StripButton $w={18} aria-label="Zoom to fit"><GreyGlass /></StripButton></Strip>
                <Strip><StripButton $w={18} aria-label="Zoom to window"><GreyGlass box /></StripButton></Strip>
              </Stack>
              <Separator $left={3} />
              <IconGrid $cols="31px 28px 27px" $left={3}>
                <GridButton aria-label="Isometric top left">{iso(1.5, 5.5)}<Arrow /></GridButton>
                <GridButton aria-label="Top"><Cube face="top" /></GridButton>
                <GridButton aria-label="Isometric top right">{iso(9.5, 5.5)}<Arrow /></GridButton>
                <GridButton aria-label="Left"><Cube face="left" /></GridButton>
                <GridButton aria-label="Front"><Cube face="front" /><Arrow /></GridButton>
                <GridButton aria-label="Right"><Cube face="right" /></GridButton>
                <GridButton aria-label="Isometric bottom left">{iso(1.5, 13)}<Arrow /></GridButton>
                <GridButton aria-label="Bottom"><Cube face="bottom" /></GridButton>
                <GridButton aria-label="Isometric bottom right">{iso(9.5, 13)}<Arrow /></GridButton>
              </IconGrid>
              <Stack>
                <Strip><StripButton $w={20} aria-label="Turn left"><Turn /></StripButton><StripButton $w={20} aria-label="Turn right"><Turn flip /></StripButton></Strip>
                <Strip><StripButton $w={20} aria-label="Previous view"><SideArrow /></StripButton><StripButton $w={20} aria-label="Next view"><SideArrow right /></StripButton></Strip>
              </Stack>
              <IconGrid $cols="24px 16px" $left={5}>
                <GridButton aria-label="View plane"><EyeIcon kind="plane" /></GridButton>
                <GridButton aria-label="View surface"><EyeIcon kind="surface" /></GridButton>
                <GridButton aria-label="View grid"><EyeIcon kind="net" grey /></GridButton>
                <GridButton aria-label="Clear point"><Svg s={14} vb="0 0 15 15"><path d="M4 1H11V7H4ZM4 1L11 7M11 1L4 7" stroke="#33355a" fill="#9fa0c8" /><rect x="3" y="9" width="9" height="4" rx="2" fill="#f6c0a8" stroke="#d0603a" /></Svg></GridButton>
                <GridButton aria-label="View axis"><EyeIcon kind="surface" grey /></GridButton>
              </IconGrid>
            </GroupBody>
            <GroupLabel>View Orientation</GroupLabel>
          </Group>

          <Group $w={507}>
            <GroupBody>
              <BigButton w={64} icon={<EdgeIcon />} lines={["Edge and", "Face Display"]} drop />
              <BigButton w={60} icon={<PerspectiveIcon />} lines={["Perspective", ""]} drop />
              <BigButton w={56} icon={<AccelIcon />} lines={["Display", "Acceleration"]} />
              <BigButton w={40} icon={<SplitIcon />} lines={["Split", "View"]} drop />
              <Stack>
                <Strip>
                  {["point", "axis", "plane", "surface", "sketch", "triad", "mesh", "", "grid"].map((k) => (
                    <StripButton key={k} $w={k ? 21 : 24} aria-label={k || "empty"}>{k && <ViewIcon kind={k} />}</StripButton>
                  ))}
                </Strip>
                <Strip>
                  {["cyl", "net", "lred", "check", "redline"].map((k, i) => (
                    <StripButton key={k} $on={i < 2} aria-label={k}><ViewIcon kind={k} /></StripButton>
                  ))}
                </Strip>
              </Stack>
              <BigButton w={42} icon={<HomeIcon />} lines={["Home", "Window"]} />
              <BigButton w={44} icon={<ArrangeIcon />} lines={["Arrange", "Windows"]} />
            </GroupBody>
            <GroupLabel>Viewing Options</GroupLabel>
          </Group>
        </Ribbon>
      </RibbonFrame>

      <Work>
        <Explorer>
          <ExplorerTitle>Design Explorer</ExplorerTitle>
          <TreeBox>
            <TreeList>
              {ROWS.map(([guides, icon, label, dim, focus], i) => (
                <TreeRow key={i} $dim={dim}>
                  {guides.split("").map((g, j) => <Guide key={j} kind={g} />)}
                  <NodeIcon>{TREE_ICONS[icon]}</NodeIcon>
                  <NodeLabel $focus={focus}>{label}</NodeLabel>
                </TreeRow>
              ))}
            </TreeList>
            <ScrollBar>
              <ScrollArrow aria-label="Scroll left"><Svg s={6} vb="0 0 6 6"><path d="M5 0V6L1 3Z" fill="#222" /></Svg></ScrollArrow>
              <ScrollThumb><Svg s={8} h={6} vb="0 0 8 6"><path d="M1.500 0V6M4.500 0V6M7.500 0V6" stroke="#555" /></Svg></ScrollThumb>
              <Spacer />
              <ScrollArrow aria-label="Scroll right"><Svg s={6} vb="0 0 6 6"><path d="M1 0V6L5 3Z" fill="#222" /></Svg></ScrollArrow>
            </ScrollBar>
          </TreeBox>
        </Explorer>
        <Canvas><Model /></Canvas>
      </Work>

      <StatusBar>
        <StatusCell $grow={1264}>Ready</StatusCell>
        <StatusCell $grow={331} $line />
      </StatusBar>

      <TaskBar>
        <StartButton aria-label="Start">
          <Svg s={30} vb="0 0 30 30">
            <circle cx="15" cy="15" r="14" fill="#2a6f9e" stroke="#8fb6d4" />
            <path d="M3 12A12 12 0 0 1 27 12Q15 17 3 12Z" fill="#88adc6" opacity=".6" />
            <path d="M8 9Q11 7 14 9L13 14Q10 12 7 14Z" fill="#ee6a32" />
            <path d="M15 9Q19 11 22 9L21 14Q18 16 14 14Z" fill="#93c83e" />
            <path d="M7 15Q10 13 13 15L12 20Q9 18 6 20Z" fill="#4aa2e2" />
            <path d="M14 15Q17 17 21 15L20 20Q16 22 13 20Z" fill="#fbd13c" />
          </Svg>
        </StartButton>
        <Tasks>
          {TASKS.map(([name, icon, open]) => (
            <Task key={name} aria-label={name} $open={open} $bright={open === 2}>{icon}</Task>
          ))}
        </Tasks>
        <Spacer />
        <Tray>
          <TrayPanel $w={77}>
            <Svg s={36} h={17} vb="0 0 36 17">
              <g fill="#14a030" stroke="#e8f0e8" strokeWidth="1">
                <path d="M.5 16.500V13H6V11H13V8.500H20V5.500H27V2H35.500V16.500Z" />
                <path d="M6.500 13V16M13.500 11V16M20.500 8V16M27.500 5V16" stroke="#0b5a1c" />
              </g>
            </Svg>
            <Svg s={14} vb="0 0 14 14"><path d="M7 5L5 13H9Z" fill="#fff" /><circle cx="7" cy="5" r="1.700" fill="#fff" /><path d="M4 2Q2 5 4 8M2 1Q-1 5 2 9M10 2Q12 5 10 8M12 1Q15 5 12 9" fill="none" stroke="#fff" /></Svg>
          </TrayPanel>
          <TrayPanel $w={80}>
            <Battery>100%</Battery>
            <Svg s={14} vb="0 0 14 14"><path d="M5 3H10V11H5Q1 10 1 7T5 3Z" fill="#111" stroke="#ddd" strokeWidth=".8" /><path d="M10 5H14M10 9H14" stroke="#eee" strokeWidth="1.500" /></Svg>
          </TrayPanel>
          <TrayButton aria-label="Show hidden icons"><Svg s={7} vb="0 0 8 6"><path d="M0 5L4 1L8 5Z" fill="#fff" /></Svg></TrayButton>
          <TrayButton aria-label="Action center"><Svg s={13} vb="0 0 13 13"><path d="M1 1H2.500V13H1ZM3 2Q5 1 7 3T12 3L10 8Q8 9 6 8T3 8Z" fill="#fff" /></Svg></TrayButton>
          <TrayButton aria-label="Volume"><Svg s={12} vb="0 0 12 12"><path d="M3 4H5L9 0V12L5 8H3Z" fill="#fff" /></Svg></TrayButton>
          <Clock><span>9:21 AM</span><span>2/6/2018</span></Clock>
          <ShowDesktop aria-label="Show desktop" />
        </Tray>
      </TaskBar>
    </Shell>
  );
}
